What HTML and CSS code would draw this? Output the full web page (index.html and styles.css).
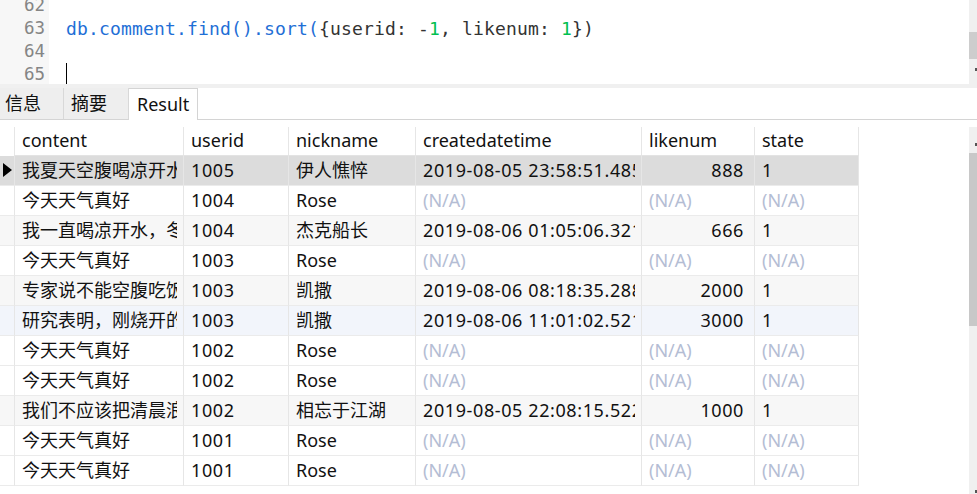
FILE: index.html
```html
<!DOCTYPE html>
<html>
<head>
<meta charset="utf-8">
<link rel="stylesheet" href="styles.css">
</head>
<body>
<div class="editor">
  <div class="gutter">
    <div class="ln">62</div>
    <div class="ln">63</div>
    <div class="ln">64</div>
    <div class="ln">65</div>
  </div>
  <div class="code">
    <div class="line"></div>
    <div class="line"><span class="fn">db.comment.find().sort(</span>{userid: -<span class="num">1</span>, likenum: <span class="num">1</span>})</div>
    <div class="line"></div>
    <div class="line"><span class="cursor"></span></div>
  </div>
  <div class="vscroll top"><div class="thumb"></div><div class="mark"></div></div>
</div>
<div class="band"></div>
<div class="tabs">
  <div class="tab t1">信息</div>
  <div class="tab t2">摘要</div>
  <div class="tab active">Result</div>
  <div class="tabfill"></div>
</div>
<div class="results">
  <div class="gridwrap">
    <div class="grid">
      <div class="ind hd"></div><div class="c hd">content</div><div class="c hd">userid</div><div class="c hd">nickname</div><div class="c hd">createdatetime</div><div class="c hd">likenum</div><div class="c hd last">state</div>

      <div class="ind sel"><span class="tri"></span></div><div class="c sel"><span class="t">我夏天空腹喝凉开水，冬天喝开水</span></div><div class="c sel d">1005</div><div class="c sel">伊人憔悴</div><div class="c sel d"><span class="t">2019-08-05 23:58:51.485</span></div><div class="c sel r d">888</div><div class="c sel last d">1</div>

      <div class="ind"></div><div class="c">今天天气真好</div><div class="c d">1004</div><div class="c">Rose</div><div class="c na">(N/A)</div><div class="c na">(N/A)</div><div class="c na last">(N/A)</div>

      <div class="ind alt"></div><div class="c alt"><span class="t">我一直喝凉开水，冬天夏天都喝</span></div><div class="c alt d">1004</div><div class="c alt">杰克船长</div><div class="c alt d"><span class="t">2019-08-06 01:05:06.321</span></div><div class="c alt r d">666</div><div class="c alt last d">1</div>

      <div class="ind"></div><div class="c">今天天气真好</div><div class="c d">1003</div><div class="c">Rose</div><div class="c na">(N/A)</div><div class="c na">(N/A)</div><div class="c na last">(N/A)</div>

      <div class="ind alt"></div><div class="c alt"><span class="t">专家说不能空腹吃饭，影响健康</span></div><div class="c alt d">1003</div><div class="c alt">凯撒</div><div class="c alt d"><span class="t">2019-08-06 08:18:35.288</span></div><div class="c alt r d">2000</div><div class="c alt last d">1</div>

      <div class="ind hov"></div><div class="c hov"><span class="t">研究表明，刚烧开的水千万不能喝</span></div><div class="c hov d">1003</div><div class="c hov">凯撒</div><div class="c hov d"><span class="t">2019-08-06 11:01:02.521</span></div><div class="c hov r d">3000</div><div class="c hov last d">1</div>

      <div class="ind"></div><div class="c">今天天气真好</div><div class="c d">1002</div><div class="c">Rose</div><div class="c na">(N/A)</div><div class="c na">(N/A)</div><div class="c na last">(N/A)</div>

      <div class="ind"></div><div class="c">今天天气真好</div><div class="c d">1002</div><div class="c">Rose</div><div class="c na">(N/A)</div><div class="c na">(N/A)</div><div class="c na last">(N/A)</div>

      <div class="ind alt"></div><div class="c alt"><span class="t">我们不应该把清晨浪费在手机上</span></div><div class="c alt d">1002</div><div class="c alt">相忘于江湖</div><div class="c alt d"><span class="t">2019-08-05 22:08:15.522</span></div><div class="c alt r d">1000</div><div class="c alt last d">1</div>

      <div class="ind"></div><div class="c">今天天气真好</div><div class="c d">1001</div><div class="c">Rose</div><div class="c na">(N/A)</div><div class="c na">(N/A)</div><div class="c na last">(N/A)</div>

      <div class="ind"></div><div class="c">今天天气真好</div><div class="c d">1001</div><div class="c">Rose</div><div class="c na">(N/A)</div><div class="c na">(N/A)</div><div class="c na last">(N/A)</div>
    </div>
  </div>
  <div class="vscroll bottom"><div class="mark m1"></div><div class="thumb"></div><div class="mark m2"></div></div>
</div>
</body>
</html>
```

FILE: styles.css
```css
* { box-sizing: border-box; }
html, body { margin: 0; padding: 0; background: #fff; overflow: hidden; }
body { width: 977px; height: 494px; font-family: "Noto Sans", "Open Sans", "Noto Sans CJK SC", sans-serif; color: #111; }

.editor { display: flex; height: 84px; background: #fff; overflow: hidden; }
.gutter { width: 49px; background: #f7f7f7; margin-top: -6px; }
.ln { height: 23px; line-height: 23px; text-align: right; padding-right: 4px; font-family: "DejaVu Sans Mono", monospace; font-size: 17.5px; color: #858585; }
.code { flex: 1; padding-left: 17px; margin-top: -6px; font-family: "DejaVu Sans Mono", monospace; font-size: 18px; letter-spacing: 0.16px; color: #333; }
.line { height: 23px; line-height: 23px; white-space: pre; }
.fn { color: #1f6fd6; }
.num { color: #00c050; }
.cursor { display: inline-block; width: 1px; height: 23px; background: #000; vertical-align: top; }

.vscroll { width: 8px; background: #f0f0f0; position: relative; }
.vscroll.top .thumb { margin-top: 32px; height: 27px; background: #cdcdcd; }
.vscroll .mark { position: absolute; right: 0; width: 2px; height: 3px; background: #555; }
.vscroll.top .mark { top: 68px; }

.band { height: 4px; background: #f0f0f0; }

.tabs { display: flex; height: 32px; }
.tab { height: 32px; font-size: 18px; line-height: 30px; border-bottom: 1px solid #d4d4d4; background: #eeeeee; border-right: 1px solid #d8d8d8; }
.t1 { width: 64px; padding-left: 5px; }
.t2 { width: 65px; padding-left: 7px; }
.tab.active { width: 69px; padding-left: 8px; background: #fff; border: 1px solid #d4d4d4; border-bottom: none; border-left: none; }
.tabfill { flex: 1; border-bottom: 1px solid #d4d4d4; background: #fff; }

.results { display: flex; height: 374px; }
.gridwrap { flex: 1; padding-top: 7px; background: #fff; }
.grid { display: grid; grid-template-columns: 14px 169px 105px 127px 226px 113px 105px; grid-auto-rows: 30px; grid-template-rows: 29px; }
.grid > div { font-size: 18px; white-space: nowrap; overflow: hidden; border-bottom: 1px solid #ebebeb; line-height: 28px; }
.c { border-left: 1px solid #e6e6e6; padding-left: 7px; padding-right: 6px; }
.c.last { border-right: 1px solid #e6e6e6; }
.t { display: block; overflow: hidden; }
.d { letter-spacing: 0.6px; }
.hd { border-bottom-color: #e3e3e3 !important; line-height: 27px !important; }
.ind.hd { border-bottom: none !important; }
.r { text-align: right; padding-right: 10px; }
.na { color: #b4bdd4; }
.sel { background: #dcdcdc; }
.alt { background: #f7f7f7; }
.hov { background: #f2f5fb; }
.ind { position: relative; }
.tri { position: absolute; left: 3px; top: 7px; width: 0; height: 0; border-top: 7px solid transparent; border-bottom: 7px solid transparent; border-left: 9px solid #000; }

.vscroll.bottom { margin-top: 7px; height: 367px; }
.vscroll.bottom .thumb { margin-top: 26px; height: 173px; background: #c8c8c8; }
.vscroll.bottom .m1 { top: 16px; }
.vscroll.bottom .m2 { bottom: 1px; }
```
